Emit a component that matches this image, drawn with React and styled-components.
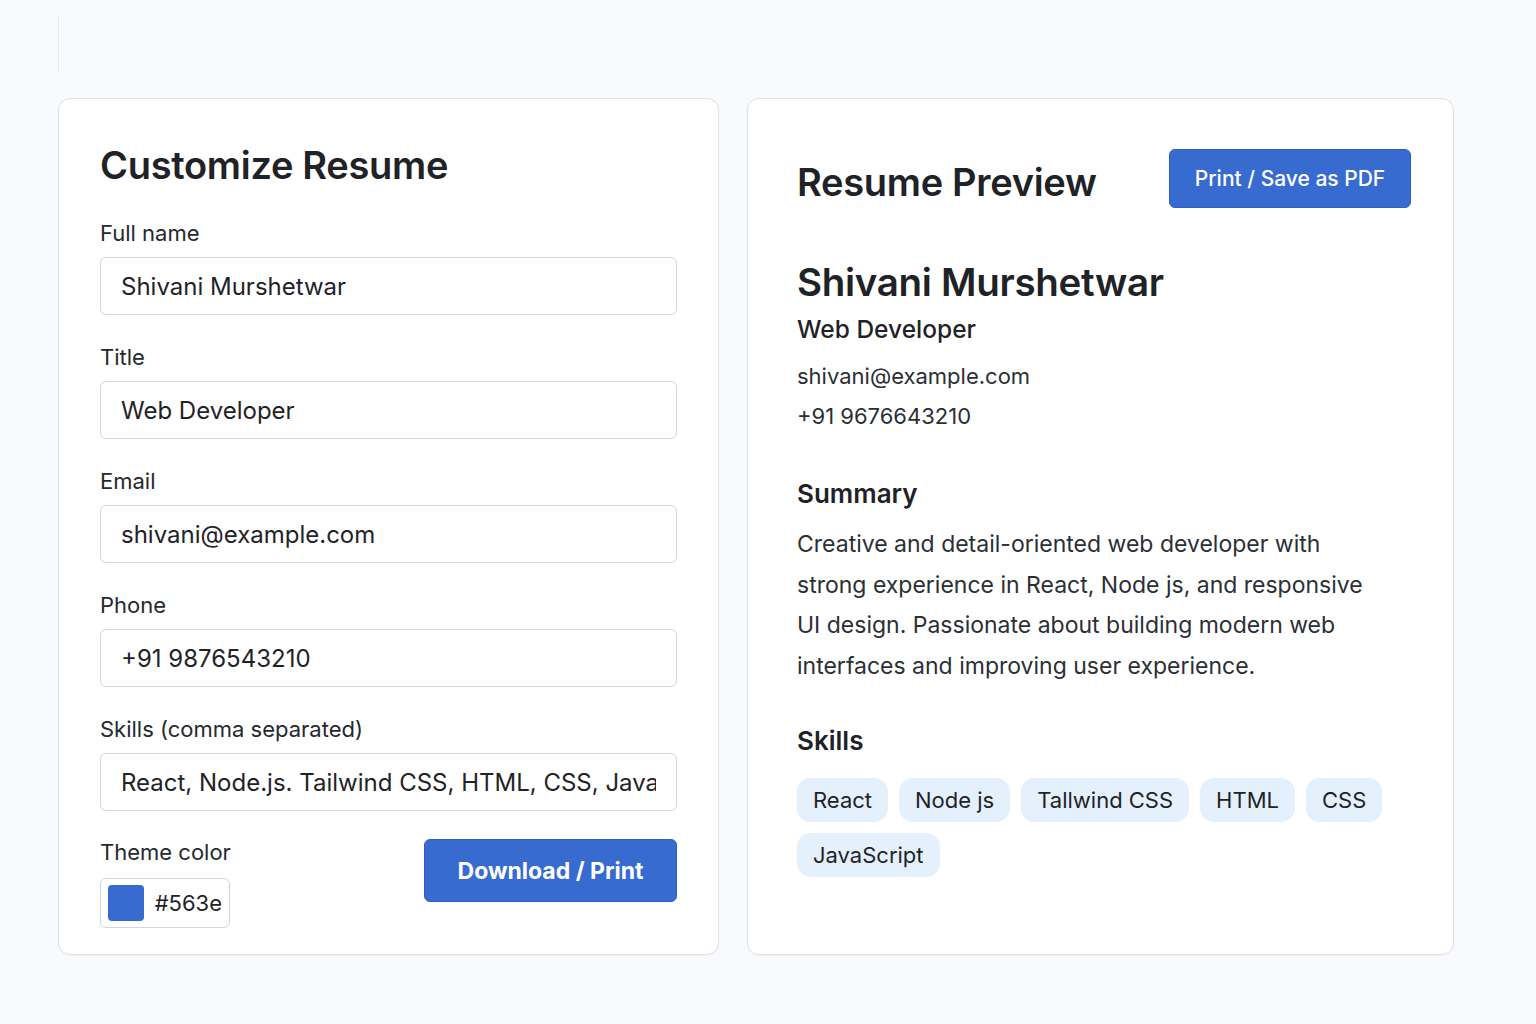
import React, { useState } from "react";
import styled, { createGlobalStyle } from "styled-components";

const GlobalStyle = createGlobalStyle`
  body {
    margin: 0;
    background: #f8fafc;
    font-family: Inter, "Noto Sans", "Liberation Sans", sans-serif;
    color: #1f2328;
  }
`;

const skills = ["React", "Node js", "Tallwind CSS", "HTML", "CSS", "JavaScript"];

const App = () => {
  const [form, setForm] = useState({
    name: "Shivani Murshetwar",
    title: "Web Developer",
    email: "shivani@example.com",
    phone: "+91 9876543210",
    skills: "React, Node.js. Tailwind CSS, HTML, CSS, JavaScript",
  });

  const update = (key) => (e) => setForm({ ...form, [key]: e.target.value });

  return (
    <>
      <GlobalStyle />
      <Page>
        <Marker />
        <Grid>
          <Card>
            <Heading>Customize Resume</Heading>
            <Field>
              <Label>Full name</Label>
              <Input value={form.name} onChange={update("name")} />
            </Field>
            <Field>
              <Label>Title</Label>
              <Input value={form.title} onChange={update("title")} />
            </Field>
            <Field>
              <Label>Email</Label>
              <Input value={form.email} onChange={update("email")} />
            </Field>
            <Field>
              <Label>Phone</Label>
              <Input value={form.phone} onChange={update("phone")} />
            </Field>
            <Field>
              <Label>Skills (comma separated)</Label>
              <Input value={form.skills} onChange={update("skills")} />
            </Field>
            <BottomRow>
              <div>
                <Label>Theme color</Label>
                <ColorBox>
                  <Swatch />
                  <span>#563e</span>
                </ColorBox>
              </div>
              <PrimaryButton $big>Download / Print</PrimaryButton>
            </BottomRow>
          </Card>

          <PreviewCard>
            <PreviewHeader>
              <Heading>Resume Preview</Heading>
              <PrimaryButton>Print / Save as PDF</PrimaryButton>
            </PreviewHeader>
            <Name>Shivani Murshetwar</Name>
            <Role>Web Developer</Role>
            <Contact>shivani@example.com</Contact>
            <Contact>+91 9676643210</Contact>

            <SectionTitle $space={41}>Summary</SectionTitle>
            <Summary>
              Creative and detail-oriented web developer with strong experience
              in React, Node js, and responsive UI design. Passionate about
              building modern web interfaces and improving user experience.
            </Summary>

            <SectionTitle $space={37}>Skills</SectionTitle>
            <Tags>
              {skills.map((s) => (
                <Tag key={s}>{s}</Tag>
              ))}
            </Tags>
          </PreviewCard>
        </Grid>
      </Page>
    </>
  );
};

const Page = styled.div`
  padding: 16px 58px 60px;
`;

const Marker = styled.div`
  height: 56px;
  border-left: 1px solid #e3e7ec;
  margin-bottom: 26px;
`;

const Grid = styled.div`
  display: grid;
  grid-template-columns: 661px 707px;
  gap: 28px;
  align-items: stretch;
`;

const Card = styled.div`
  background: #fff;
  border: 1px solid #dbe2ea;
  border-radius: 12px;
  padding: 40px 41px 26px 41px;
  box-shadow: 0 1px 2px rgba(15, 23, 42, 0.03);
`;

const PreviewCard = styled(Card)`
  padding: 50px 42px 40px 49px;
`;

const Heading = styled.h1`
  margin: 0 0 28px;
  font-size: 38px;
  line-height: 52px;
  font-weight: 600;
  letter-spacing: -0.3px;
  color: #1f2226;
`;

const Field = styled.div`
  margin-bottom: 28px;
`;

const Label = styled.div`
  font-size: 22px;
  line-height: 28px;
  color: #24292f;
  margin-bottom: 10px;
`;

const Input = styled.input`
  box-sizing: border-box;
  width: 100%;
  height: 58px;
  padding: 0 20px;
  border: 1px solid #cfd6df;
  border-radius: 6px;
  font-family: inherit;
  font-size: 24px;
  color: #1f2328;
  background: #fff;
  outline: none;
`;

const BottomRow = styled.div`
  display: flex;
  justify-content: space-between;
  align-items: flex-start;
  margin-top: -1px;

  & ${Label} {
    margin-bottom: 12px;
  }
`;

const ColorBox = styled.div`
  box-sizing: border-box;
  display: inline-flex;
  align-items: center;
  gap: 11px;
  height: 50px;
  width: 130px;
  padding: 0 7px;
  border: 1px solid #cfd6df;
  border-radius: 6px;
  font-size: 22px;
  color: #1f2328;
`;

const Swatch = styled.div`
  width: 36px;
  height: 36px;
  border-radius: 4px;
  background: #386bcf;
`;

const PrimaryButton = styled.button`
  height: ${(p) => (p.$big ? "63px" : "59px")};
  margin-top: ${(p) => (p.$big ? "1px" : "0")};
  width: ${(p) => (p.$big ? "253px" : "242px")};
  padding: 0;
  white-space: nowrap;
  background: #386bcf;
  border: 1px solid #2c5ec4;
  border-radius: 6px;
  color: #fff;
  font-family: inherit;
  font-size: ${(p) => (p.$big ? "23px" : "21px")};
  font-weight: ${(p) => (p.$big ? 700 : 500)};
  cursor: pointer;
`;

const PreviewHeader = styled.div`
  display: flex;
  justify-content: space-between;
  align-items: center;
  margin-bottom: 48px;

  & ${Heading} {
    margin: 0;
    padding-top: 6px;
  }
`;

const Name = styled.h2`
  margin: 0;
  font-size: 38.5px;
  line-height: 52px;
  font-weight: 600;
  letter-spacing: -0.3px;
  color: #1f2226;
`;

const Role = styled.div`
  margin: 4px 0 10px;
  font-size: 24.5px;
  line-height: 34px;
  font-weight: 500;
  color: #1f2328;
`;

const Contact = styled.div`
  font-size: 22px;
  line-height: 40px;
  color: #2b2f35;
`;

const SectionTitle = styled.h3`
  margin: ${(p) => p.$space}px 0 13px;
  font-size: 26px;
  line-height: 34px;
  font-weight: 600;
  color: #1f2226;
`;

const Summary = styled.p`
  margin: 0;
  max-width: 590px;
  font-size: 23px;
  line-height: 40.7px;
  color: #2b2f35;
`;

const Tags = styled.div`
  display: flex;
  flex-wrap: wrap;
  gap: 11px;
  margin-top: 20px;
`;

const Tag = styled.span`
  display: inline-flex;
  align-items: center;
  height: 44px;
  padding: 0 16px;
  border-radius: 14px;
  background: #e5f0fd;
  font-size: 22px;
  color: #1f2328;
`;

export default App;
